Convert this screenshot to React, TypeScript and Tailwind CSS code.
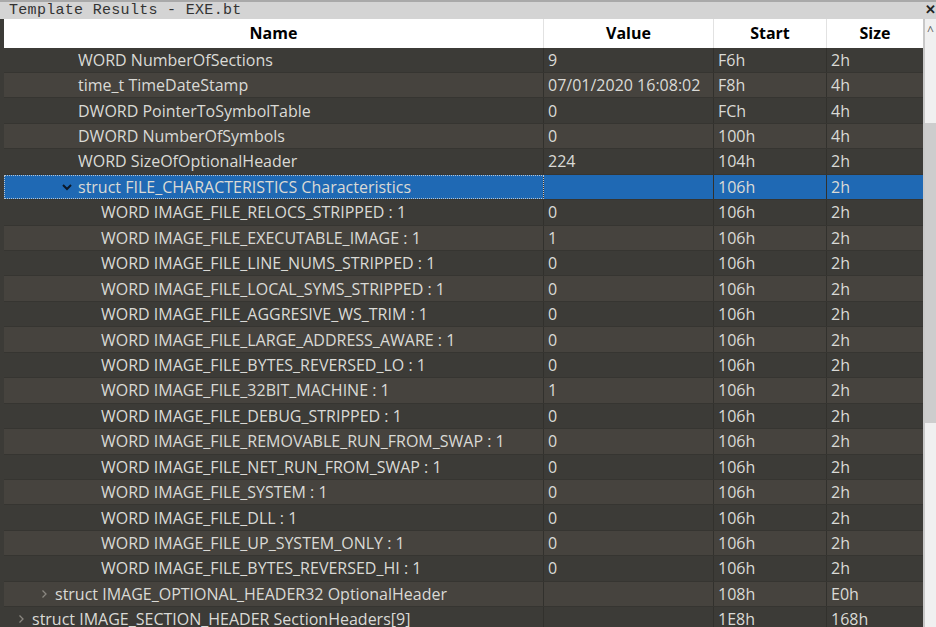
const ROWS = [
  { name: "WORD NumberOfSections", value: "9", start: "F6h", size: "2h", level: 2 },
  { name: "time_t TimeDateStamp", value: "07/01/2020 16:08:02", start: "F8h", size: "4h", level: 2 },
  { name: "DWORD PointerToSymbolTable", value: "0", start: "FCh", size: "4h", level: 2 },
  { name: "DWORD NumberOfSymbols", value: "0", start: "100h", size: "4h", level: 2 },
  { name: "WORD SizeOfOptionalHeader", value: "224", start: "104h", size: "2h", level: 2 },
  { name: "struct FILE_CHARACTERISTICS Characteristics", value: "", start: "106h", size: "2h", level: 2, open: true, selected: true },
  { name: "WORD IMAGE_FILE_RELOCS_STRIPPED : 1", value: "0", start: "106h", size: "2h", level: 3 },
  { name: "WORD IMAGE_FILE_EXECUTABLE_IMAGE : 1", value: "1", start: "106h", size: "2h", level: 3 },
  { name: "WORD IMAGE_FILE_LINE_NUMS_STRIPPED : 1", value: "0", start: "106h", size: "2h", level: 3 },
  { name: "WORD IMAGE_FILE_LOCAL_SYMS_STRIPPED : 1", value: "0", start: "106h", size: "2h", level: 3 },
  { name: "WORD IMAGE_FILE_AGGRESIVE_WS_TRIM : 1", value: "0", start: "106h", size: "2h", level: 3 },
  { name: "WORD IMAGE_FILE_LARGE_ADDRESS_AWARE : 1", value: "0", start: "106h", size: "2h", level: 3 },
  { name: "WORD IMAGE_FILE_BYTES_REVERSED_LO : 1", value: "0", start: "106h", size: "2h", level: 3 },
  { name: "WORD IMAGE_FILE_32BIT_MACHINE : 1", value: "1", start: "106h", size: "2h", level: 3 },
  { name: "WORD IMAGE_FILE_DEBUG_STRIPPED : 1", value: "0", start: "106h", size: "2h", level: 3 },
  { name: "WORD IMAGE_FILE_REMOVABLE_RUN_FROM_SWAP : 1", value: "0", start: "106h", size: "2h", level: 3 },
  { name: "WORD IMAGE_FILE_NET_RUN_FROM_SWAP : 1", value: "0", start: "106h", size: "2h", level: 3 },
  { name: "WORD IMAGE_FILE_SYSTEM : 1", value: "0", start: "106h", size: "2h", level: 3 },
  { name: "WORD IMAGE_FILE_DLL : 1", value: "0", start: "106h", size: "2h", level: 3 },
  { name: "WORD IMAGE_FILE_UP_SYSTEM_ONLY : 1", value: "0", start: "106h", size: "2h", level: 3 },
  { name: "WORD IMAGE_FILE_BYTES_REVERSED_HI : 1", value: "0", start: "106h", size: "2h", level: 3 },
  { name: "struct IMAGE_OPTIONAL_HEADER32 OptionalHeader", value: "", start: "108h", size: "E0h", level: 1, closed: true },
  { name: "struct IMAGE_SECTION_HEADER SectionHeaders[9]", value: "", start: "1E8h", size: "168h", level: 0, closed: true },
];

// left padding per tree depth (chevron slot is 16px wide)
const INDENT = ["pl-[12px]", "pl-[35px]", "pl-[58px]", "pl-[81px]"];

function Chevron({ open }: { open?: boolean }) {
  return (
    <svg width="10" height="10" viewBox="0 0 10 10" className="shrink-0 mr-[6px]">
      {open ? (
        <path d="M1 3 L5 7 L9 3" fill="none" stroke="#0b1828" strokeWidth="2" />
      ) : (
        <path d="M3.5 1.5 L7 5 L3.5 8.5" fill="none" stroke="#8a8780" strokeWidth="1.3" />
      )}
    </svg>
  );
}

export default function App() {
  return (
    <div className="w-[936px] h-[627px] overflow-hidden bg-[#3c3b37] flex flex-col font-['Open_Sans','Noto_Sans',sans-serif]">
      {/* Title */}
      <div className="h-[19px] shrink-0 bg-[#d4d4d4] border-t-2 border-[#a9a9a9] flex items-center pl-[9px] relative">
        <span className="font-['Liberation_Mono',monospace] text-[15px] leading-none text-[#333] tracking-[0.3px]">
          Template Results - EXE.bt
        </span>
        <span className="absolute right-[0px] top-[1px] text-[13px] font-bold leading-none text-[#222]">✕</span>
      </div>

      <div className="flex flex-1 min-h-0">
        <div className="w-[4px] shrink-0 bg-[#3c3b37]" />
        {/* Table */}
        <div className="w-[919px] flex flex-col">
          <div className="h-[28.5px] shrink-0 bg-white flex text-[16px] font-bold text-black leading-none">
            <div className="w-[540px] flex items-center justify-center border-r border-[#e2e2e2]">Name</div>
            <div className="w-[170px] flex items-center justify-center border-r border-[#e2e2e2]">Value</div>
            <div className="w-[113px] flex items-center justify-center border-r border-[#e2e2e2]">Start</div>
            <div className="w-[96px] flex items-center justify-center">Size</div>
          </div>
          {ROWS.map((r, i) => {
            const bg = r.selected ? "bg-[#1f69b4]" : i % 2 === 0 ? "bg-[#3c3b37]" : "bg-[#46433e]";
            return (
              <div
                key={i}
                className={`h-[25.45px] shrink-0 flex text-[16px] leading-none text-[#dadad6] border-b border-[#363531] ${bg}`}
              >
                <div
                  className={`w-[540px] flex items-center border-r border-[#32312d] ${INDENT[r.level]} ${
                    r.selected ? "outline-1 outline-dotted outline-[#b8c4d0] -outline-offset-1" : ""
                  }`}
                >
                  {r.open || r.closed ? <Chevron open={r.open} /> : <span className="w-[16px] shrink-0" />}
                  <span className="whitespace-nowrap">{r.name}</span>
                </div>
                <div className="w-[170px] flex items-center pl-[4px] border-r border-[#32312d] whitespace-nowrap">{r.value}</div>
                <div className="w-[113px] flex items-center pl-[4px] border-r border-[#32312d]">{r.start}</div>
                <div className="w-[96px] flex items-center pl-[4px]">{r.size}</div>
              </div>
            );
          })}
        </div>
        {/* Scrollbar */}
        <div className="flex-1 bg-[#f0f0f0] border-l-2 border-[#c8c8c8] flex flex-col items-center">
          <span className="mt-[6px] text-[12px] leading-none text-[#606060]">^</span>
          <div className="mt-[86px] w-full h-[300px] bg-[#cdcdcd]" />
        </div>
      </div>
    </div>
  );
}
